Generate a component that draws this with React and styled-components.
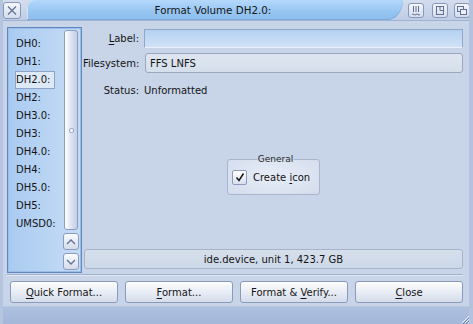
import styled, { createGlobalStyle } from 'styled-components'

const GlobalStyle = createGlobalStyle`
  html, body {
    margin: 0;
    padding: 0;
    background: #c8d5e9;
  }
  body {
    font-family: "DejaVu Sans", "Noto Sans", sans-serif;
    font-size: 10px;
    color: #141414;
  }
`

const Window = styled.div`
  width: 473px;
  height: 324px;
  display: flex;
  flex-direction: column;
  background: #c8d5e9;
  box-sizing: border-box;
  border-left: 3px solid #b5c4df;
  border-right: 4px solid #b3c3de;
  overflow: hidden;
`

const TitleBar = styled.div`
  height: 20px;
  display: flex;
  align-items: stretch;
  border-bottom: 1px solid #9fb2d3;
  background: linear-gradient(#d3ddee, #bfcde5);
  margin-left: -3px;
  margin-right: -4px;
  padding: 0 3px;
`

const TitleTab = styled.div`
  width: 376px;
  margin-left: 6px;
  display: flex;
  align-items: center;
  justify-content: center;
  background: linear-gradient(#b4d8fb, #96c5f2 60%, #8dbdee);
  border-top-left-radius: 8px;
  border-bottom-right-radius: 16px 20px;
  box-shadow: inset 0 -1px 0 #7fa9dc, inset 1px 0 0 #cfe5fc;
  font-size: 10.3px;
  padding: 0 4px 1px 0;
`

const GadgetButton = styled.div`
  width: 16px;
  height: 15px;
  margin-top: 3px;
  margin-left: ${p => p.$gap || 0}px;
  box-sizing: border-box;
  border: 1px solid #8797ba;
  border-radius: 3px;
  background: linear-gradient(#f4f6fb, #d5ddec);
  display: flex;
  align-items: center;
  justify-content: center;
`

const CloseButton = styled(GadgetButton)`
  width: 18px;
  height: 17px;
  margin-top: 2px;
`

const Content = styled.div`
  flex: 1;
  display: flex;
  flex-direction: column;
  padding: 6px 6px 3px 4px;
`

const Main = styled.div`
  height: 246px;
  display: flex;
  gap: 1px;
`

const DeviceList = styled.div`
  width: 75px;
  box-sizing: border-box;
  border: 1px solid #5f88c2;
  box-shadow: inset 0 0 0 1px #9cbde8;
  background: linear-gradient(90deg, #a9cbf1, #c6dcf5);
  display: flex;
  padding: 2px;
`

const Items = styled.div`
  flex: 1;
  padding: 5px 0 0 5px;
`

const Item = styled.div`
  height: 18px;
  line-height: 16px;
  box-sizing: border-box;
  width: ${p => (p.$selected ? '40px' : 'auto')};
  border: 1px solid ${p => (p.$selected ? '#8fa3c6' : 'transparent')};
  background: ${p => (p.$selected ? '#dde9f7' : 'transparent')};
`

const ScrollColumn = styled.div`
  width: 16px;
  display: flex;
  flex-direction: column;
  gap: 3px;
`

const Track = styled.div`
  flex: 1;
  margin: 0 1px;
  box-sizing: border-box;
  border: 1px solid #8a9cc0;
  border-radius: 3px;
  background: linear-gradient(90deg, #ffffff, #d7def0 60%, #c4cfe6);
  display: flex;
  align-items: center;
  justify-content: center;
`

const Grip = styled.div`
  width: 3px;
  height: 3px;
  border-radius: 50%;
  background: #fff;
  box-shadow: 0 0 0 1px #9aa9c7;
`

const ArrowButton = styled.div`
  height: 17px;
  box-sizing: border-box;
  border: 1px solid #8a9cc0;
  border-radius: 3px;
  background: linear-gradient(#fbfcfe, #d3dbea);
  display: flex;
  align-items: center;
  justify-content: center;
`

const Form = styled.div`
  flex: 1;
  display: flex;
  flex-direction: column;
  padding-top: 2px;
`

const FieldRow = styled.div`
  display: flex;
  align-items: center;
  gap: 5px;
  margin-bottom: ${p => p.$after || 0}px;
`

const FieldLabel = styled.div`
  width: 56px;
  text-align: right;
  white-space: nowrap;
`

const TextInput = styled.div`
  flex: 1;
  height: 19px;
  box-sizing: border-box;
  border: 1px solid #91a6c8;
  border-bottom-color: #e8f0fa;
  background: linear-gradient(#b5d1f1, #cfe2f6);
`

const CycleBox = styled.div`
  flex: 1;
  height: 20px;
  box-sizing: border-box;
  margin-left: 1px;
  border: 1px solid #9aa7be;
  border-radius: 3px;
  background: linear-gradient(#dfe6f1, #d5deeb);
  display: flex;
  align-items: center;
  padding-left: 4px;
`

const StatusValue = styled.div`
  height: 20px;
  display: flex;
  align-items: center;
`

const GroupArea = styled.div`
  flex: 1;
  display: flex;
  align-items: center;
  justify-content: center;
  padding-left: 1px;
`

const Group = styled.fieldset`
  margin: 0;
  width: 93px;
  height: 41px;
  box-sizing: border-box;
  padding: 1px 0 0 4px;
  border: 1px solid #a9b5cb;
  border-radius: 3px;
  background: radial-gradient(ellipse at 50% 45%, #e8eef8, #d3dced);
  display: flex;
  align-items: center;
`

const Legend = styled.legend`
  margin: 0 auto;
  padding: 0 1px;
  font-size: 9px;
  line-height: 10px;
  color: #1e1e1e;
`

const CheckRow = styled.div`
  display: flex;
  align-items: center;
  gap: 6px;
  margin-top: -5px;
`

const CheckBox = styled.div`
  width: 15px;
  height: 15px;
  box-sizing: border-box;
  border: 1px solid #8c9cbd;
  border-radius: 2px;
  background: linear-gradient(#ffffff, #d8e0ee);
  display: flex;
  align-items: center;
  justify-content: center;
`

const InfoBar = styled.div`
  height: 20px;
  margin: 0 0 4px 1px;
  box-sizing: border-box;
  border: 1px solid #a7b4ca;
  border-radius: 3px;
  background: linear-gradient(#d6dfec, #cdd8e8);
  display: flex;
  align-items: center;
  justify-content: center;
`

const Separator = styled.div`
  height: 1px;
  margin-top: 1px;
  background: #9fb0cd;
  box-shadow: 0 1px 0 #e2e9f4;
`

const ButtonRow = styled.div`
  display: flex;
  gap: 7px;
  margin-top: 6px;
  padding-left: 3px;
`

const Button = styled.div`
  flex: 1;
  height: 22px;
  box-sizing: border-box;
  border: 1px solid #8b9abb;
  border-radius: 3px;
  background: linear-gradient(#fdfdfe, #e8edf5 50%, #d5dcea);
  display: flex;
  align-items: center;
  justify-content: center;
`

const Key = styled.span`
  text-decoration: underline;
  text-underline-offset: 2px;
`

const BottomFrame = styled.div`
  height: 17px;
  border-top: 1px solid #b8c6df;
  background: linear-gradient(#adc0e0, #a4b7d9);
  margin-left: -3px;
  margin-right: -4px;
  display: flex;
  justify-content: flex-end;
  align-items: flex-end;
`

const devices = ['DH0:', 'DH1:', 'DH2.0:', 'DH2:', 'DH3.0:', 'DH3:', 'DH4.0:', 'DH4:', 'DH5.0:', 'DH5:', 'UMSD0:']

const stroke = '#5f6f95'

export default function App() {
  return (
    <>
      <GlobalStyle />
      <Window>
        <TitleBar>
          <CloseButton>
            <svg width="14" height="13" viewBox="0 0 14 13">
              <path d="M3 2.5l8 8M11 2.5l-8 8" stroke={stroke} strokeWidth="1.2" fill="none" />
            </svg>
          </CloseButton>
          <TitleTab>Format Volume DH2.0:</TitleTab>
          <GadgetButton $gap={5}>
            <svg width="14" height="13" viewBox="0 0 14 13">
              <path d="M4.5 2v6M7 2v6M9.5 2v6" stroke={stroke} strokeWidth="1" fill="none" />
              <path d="M3 10.5q1-1 2 0t2 0t2 0t2 0" stroke={stroke} strokeWidth="1" fill="none" />
            </svg>
          </GadgetButton>
          <GadgetButton $gap={8}>
            <svg width="14" height="13" viewBox="0 0 14 13">
              <rect x="3.5" y="2.5" width="7" height="8" stroke={stroke} fill="none" />
              <path d="M7 2.5v4h3.5" stroke={stroke} fill="none" />
            </svg>
          </GadgetButton>
          <GadgetButton $gap={6}>
            <svg width="14" height="13" viewBox="0 0 14 13">
              <rect x="2.5" y="2.5" width="6" height="5" stroke={stroke} fill="none" />
              <rect x="5.5" y="5.5" width="6" height="5" stroke={stroke} fill="#eef2f8" />
            </svg>
          </GadgetButton>
        </TitleBar>
        <Content>
          <Main>
            <DeviceList>
              <Items>
                {devices.map(d => (
                  <Item key={d} $selected={d === 'DH2.0:'}>{d}</Item>
                ))}
              </Items>
              <ScrollColumn>
                <Track>
                  <Grip />
                </Track>
                <ArrowButton>
                  <svg width="12" height="10" viewBox="0 0 12 10">
                    <path d="M2 7l4-4 4 4" stroke={stroke} strokeWidth="1.3" fill="none" />
                  </svg>
                </ArrowButton>
                <ArrowButton>
                  <svg width="12" height="10" viewBox="0 0 12 10">
                    <path d="M2 3l4 4 4-4" stroke={stroke} strokeWidth="1.3" fill="none" />
                  </svg>
                </ArrowButton>
              </ScrollColumn>
            </DeviceList>
            <Form>
              <FieldRow $after={5}>
                <FieldLabel><Key>L</Key>abel:</FieldLabel>
                <TextInput />
              </FieldRow>
              <FieldRow $after={7}>
                <FieldLabel>Filesystem:</FieldLabel>
                <CycleBox>FFS LNFS</CycleBox>
              </FieldRow>
              <FieldRow>
                <FieldLabel>Status:</FieldLabel>
                <StatusValue>Unformatted</StatusValue>
              </FieldRow>
              <GroupArea>
                <Group>
                  <Legend>General</Legend>
                  <CheckRow>
                    <CheckBox>
                      <svg width="12" height="12" viewBox="0 0 12 12">
                        <path d="M2.5 6.5l2.5 3 4.5-7" stroke="#111" strokeWidth="1.4" fill="none" />
                      </svg>
                    </CheckBox>
                    <span>Create <Key>i</Key>con</span>
                  </CheckRow>
                </Group>
              </GroupArea>
              <InfoBar>ide.device, unit 1, 423.7 GB</InfoBar>
            </Form>
          </Main>
          <Separator />
          <ButtonRow>
            <Button><span><Key>Q</Key>uick Format...</span></Button>
            <Button><span><Key>F</Key>ormat...</span></Button>
            <Button><span>Format &amp; <Key>V</Key>erify...</span></Button>
            <Button><span><Key>C</Key>lose</span></Button>
          </ButtonRow>
        </Content>
        <BottomFrame>
          <svg width="14" height="14" viewBox="0 0 14 14">
            <path d="M13 3L3 13M13 6L6 13M13 9L9 13M13 12l-1 1" stroke="#eef3fb" strokeWidth="1" fill="none" />
            <path d="M14 4L4 14M14 7L7 14M14 10L10 14" stroke="#6f83ad" strokeWidth="1" fill="none" />
          </svg>
        </BottomFrame>
      </Window>
    </>
  )
}
